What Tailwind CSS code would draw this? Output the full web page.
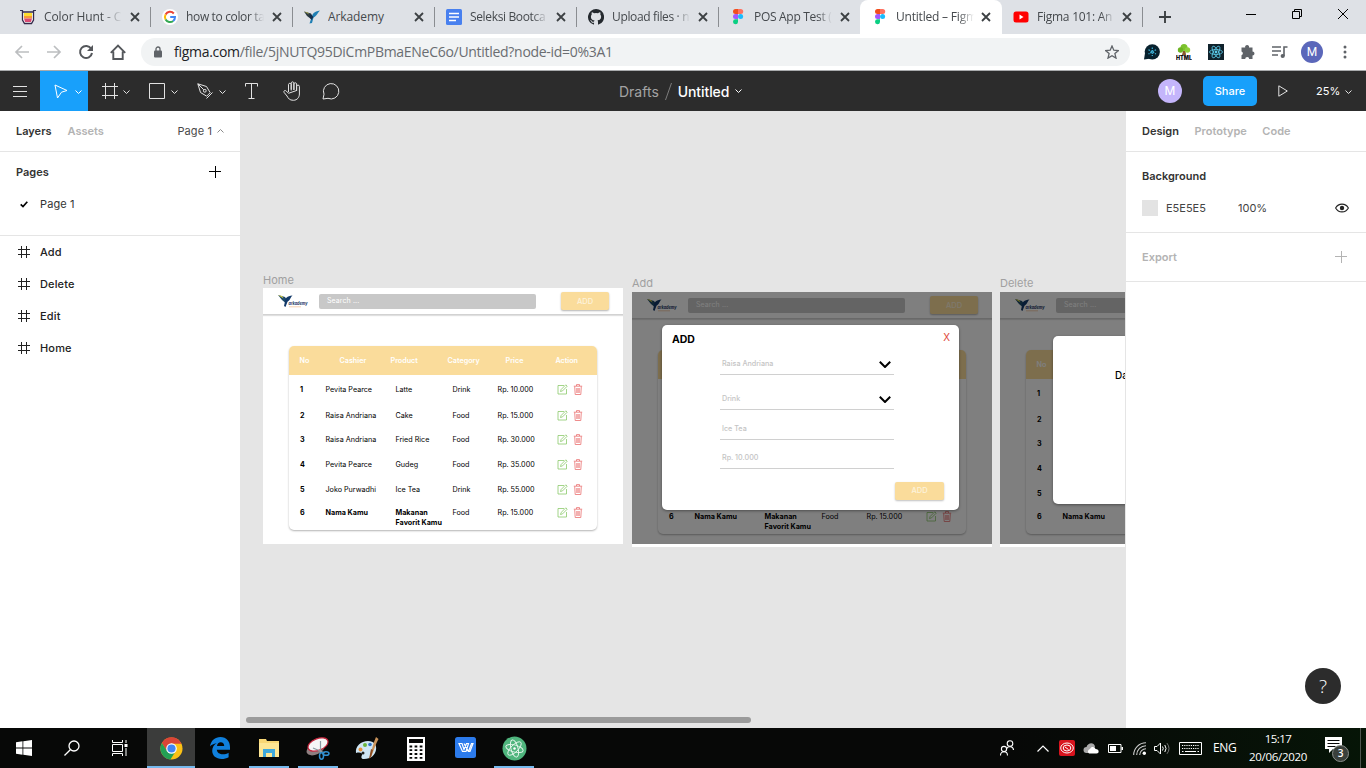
<!DOCTYPE html>
<html lang="en">
<head>
<meta charset="utf-8">
<title>Untitled – Figma</title>
<script src="https://cdn.jsdelivr.net/npm/@tailwindcss/browser@4"></script>
</head>
<body class="w-[1366px] h-[768px] overflow-hidden flex flex-col font-['Inter',sans-serif] text-[11px] text-[#333] bg-white">

<!-- shared symbols -->
<svg class="hidden">
  <symbol id="close" viewBox="0 0 10 10"><path d="M1 1l8 8M9 1L1 9" stroke="#3c4043" stroke-width="1.8" fill="none"/></symbol>
  <symbol id="figma" viewBox="0 0 12 16"><path d="M3.500 0H6v5H3.500A2.500 2.500 0 0 1 3.500 0z" fill="#f24e1e"/><path d="M6 0h2.700a2.500 2.500 0 0 1 0 5H6z" fill="#ff7262"/><path d="M3.500 5H6v5H3.500a2.500 2.500 0 0 1 0-5z" fill="#a259ff"/><circle cx="8.600" cy="7.500" r="2.500" fill="#1abcfe"/><path d="M3.500 10.300H6V13a2.500 2.500 0 1 1-2.500-2.700z" fill="#0acf83"/></symbol>
  <symbol id="bird" viewBox="0 0 16 14"><path d="M0 1.500l7 2 1.500 3L7 9 3 6z" fill="#2b3a42"/><path d="M0 1.500l4 1 1 2z" fill="#a3a04a"/><path d="M8 7.500c0-3.500 2-6 8-7-2 1.500-2.500 5-6.500 7L8 13l-2.500.5L7 9z" fill="#1f7fb4"/><path d="M6.500 4l3 3-2 3-2-3z" fill="#152e4d"/></symbol>
  <symbol id="chev" viewBox="0 0 7 4"><path d="M.5.5l3 3 3-3" fill="none" stroke="currentColor"/></symbol>
  <symbol id="hash" viewBox="0 0 12 12"><path d="M3.500 0v12M8.500 0v12M0 3.500h12M0 8.500h12" fill="none" stroke="currentColor"/></symbol>
  <symbol id="plus" viewBox="0 0 12 12"><path d="M6.500 0v12M0 5.500h12" fill="none" stroke="currentColor"/></symbol>
  <symbol id="edit" viewBox="0 0 11 11"><path d="M7 1.500H1v8.500h8.500V5" fill="none" stroke="#8cc96b" stroke-width=".8"/><path d="M3.500 7.500l.6-2L8.800.8l1.400 1.400-4.700 4.700z" fill="none" stroke="#8cc96b" stroke-width=".8"/></symbol>
  <symbol id="trash" viewBox="0 0 9 11"><path d="M.3 2.200h8.400M3 2V.6h3V2M1.200 2.500l.5 8h5.600l.5-8M3.300 4v5M4.500 4v5M5.700 4v5" fill="none" stroke="#ea6f6f" stroke-width=".8"/></symbol>
  <symbol id="logo" viewBox="0 0 31 15"><path d="M0 1l7 2 2 3-2 2.500-3-2.500z" fill="#1d4a6b"/><path d="M7 7.500c0-3.500 2-5.500 7.500-6C12.500 3 12.500 6 9.500 7.800L7.500 13 6 12z" fill="#12396a"/><path d="M0 1l4 1 1.500 2.500z" fill="#d8ce3a"/><text x="10.500" y="10.800" font-family="Inter" font-size="4.600" font-weight="700" font-style="italic" fill="#16305e" textLength="19" lengthAdjust="spacingAndGlyphs">arkademy</text><path d="M11 12.800h12" stroke="#f0b27a" stroke-width=".6"/></symbol>
</svg>

<!-- browser tabs -->
<header class="h-[34px] shrink-0 bg-[#dee1e6] flex font-['Open_Sans',sans-serif] text-[12px] tracking-[-0.25px] text-[#45494d]">
  <div class="w-[9px]"></div>
  <div class="w-[142px] flex items-center pl-[11px]">
    <svg class="w-4 h-4" viewBox="0 0 16 16"><path d="M0 1.500h3M13 1.500h3M2.500 1v2.500M13.500 1v2.500" stroke="#333355" stroke-width="1.200"/><path d="M2.500 3h11v8l-2 3.500h-7l-2-3.500z" fill="#fff" stroke="#33284a" stroke-width="1.300"/><path d="M4 4h8v3H4z" fill="#fddc2e"/><path d="M4 7h8v2.500H4z" fill="#f7983a"/><path d="M4 9.500h8L11 13H5z" fill="#d84a72"/></svg>
    <span class="ml-2 w-[78px] overflow-hidden whitespace-nowrap mask-r-from-75% tracking-[-0.1px]">Color Hunt - C</span>
    <svg class="w-[10px] h-[10px] ml-[8px]"><use href="#close"/></svg>
    <i class="ml-auto w-px h-5 bg-[#8a8d91]"></i>
  </div>
  <div class="w-[142px] flex items-center pl-[11px]">
    <svg class="w-4 h-4" viewBox="0 0 16 16"><circle cx="8" cy="8" r="8" fill="#fff"/><g fill="none" stroke-width="2"><path d="M11.800 4.500A5 5 0 0 0 3.600 5.500" stroke="#ea4335"/><path d="M3.600 5.500a5 5 0 0 0 0 5" stroke="#fbbc05"/><path d="M3.600 10.500a5 5 0 0 0 7.600 1.400" stroke="#34a853"/><path d="M11.200 11.900A5 5 0 0 0 13 8H8.200" stroke="#4285f4"/></g></svg>
    <span class="ml-2 w-[78px] overflow-hidden whitespace-nowrap mask-r-from-82% tracking-[-0.35px]">how to color ta</span>
    <svg class="w-[10px] h-[10px] ml-[8px]"><use href="#close"/></svg>
    <i class="ml-auto w-px h-5 bg-[#8a8d91]"></i>
  </div>
  <div class="w-[142px] flex items-center pl-[11px]">
    <svg class="w-4 h-[14px]"><use href="#bird"/></svg>
    <span class="ml-2 w-[78px] overflow-hidden whitespace-nowrap tracking-[-0.1px]">Arkademy</span>
    <svg class="w-[10px] h-[10px] ml-[8px]"><use href="#close"/></svg>
    <i class="ml-auto w-px h-5 bg-[#8a8d91]"></i>
  </div>
  <div class="w-[142px] flex items-center pl-[11px]">
    <svg class="w-4 h-4" viewBox="0 0 16 16"><rect width="16" height="16" rx="1.500" fill="#4880ef"/><path d="M3 4.500h10M3 8h10M3 11.500h7" stroke="#fff" stroke-width="1.700"/></svg>
    <span class="ml-2 w-[78px] overflow-hidden whitespace-nowrap mask-r-from-80% tracking-[-0.35px]">Seleksi Bootca</span>
    <svg class="w-[10px] h-[10px] ml-[8px]"><use href="#close"/></svg>
    <i class="ml-auto w-px h-5 bg-[#8a8d91]"></i>
  </div>
  <div class="w-[142px] flex items-center pl-[11px]">
    <svg class="w-4 h-4" viewBox="0 0 16 16"><path fill="#24292e" d="M8 0a8 8 0 0 0-2.530 15.590c.4.070.55-.17.55-.38v-1.490c-2.230.48-2.690-.94-2.690-.94-.36-.92-.89-1.170-.89-1.170-.73-.5.050-.49.050-.49.810.06 1.230.83 1.230.83.720 1.230 1.880.87 2.330.67.070-.52.280-.87.510-1.070-1.780-.2-3.640-.89-3.640-3.950 0-.88.310-1.590.820-2.150-.08-.2-.36-1.020.08-2.120 0 0 .67-.21 2.200.82a7.600 7.600 0 0 1 4 0c1.530-1.040 2.200-.82 2.200-.82.440 1.100.160 1.920.080 2.120.510.560.820 1.270.820 2.150 0 3.070-1.870 3.750-3.650 3.950.290.250.540.730.540 1.480v2.200c0 .21.150.46.550.38A8 8 0 0 0 8 0z"/></svg>
    <span class="ml-2 w-[78px] overflow-hidden whitespace-nowrap mask-r-from-82% tracking-[-0.35px]">Upload files · n</span>
    <svg class="w-[10px] h-[10px] ml-[8px]"><use href="#close"/></svg>
    <i class="ml-auto w-px h-5 bg-[#8a8d91]"></i>
  </div>
  <div class="w-[141px] flex items-center pl-[11px]">
    <svg class="w-4 h-4"><use href="#figma"/></svg>
    <span class="ml-2 w-[78px] overflow-hidden whitespace-nowrap mask-r-from-82% tracking-[-0.3px]">POS App Test (</span>
    <svg class="w-[10px] h-[10px] ml-[8px]"><use href="#close"/></svg>
  </div>
  <div class="w-[142px] flex items-center pl-3 bg-white rounded-t-lg">
    <svg class="w-4 h-4"><use href="#figma"/></svg>
    <span class="ml-2 w-[78px] overflow-hidden whitespace-nowrap mask-r-from-80% tracking-[-0.2px]">Untitled – Figm</span>
    <svg class="w-[10px] h-[10px] ml-[7px]"><use href="#close"/></svg>
  </div>
  <div class="w-[141px] flex items-center pl-[11px]">
    <svg class="w-4 h-4" viewBox="0 0 16 16"><rect x=".5" y="2.500" width="15" height="11" rx="2.500" fill="#f00"/><path d="M6.500 5.500v5l4-2.500z" fill="#fff"/></svg>
    <span class="ml-2 w-[78px] overflow-hidden whitespace-nowrap mask-r-from-82% tracking-[-0.25px]">Figma 101: An</span>
    <svg class="w-[10px] h-[10px] ml-[7px]"><use href="#close"/></svg>
    <i class="ml-auto w-px h-5 bg-[#8a8d91]"></i>
  </div>
  <svg class="w-3 h-3 mt-[11px] ml-4" viewBox="0 0 12 12"><path d="M6 0v12M0 6h12" stroke="#3c4043" stroke-width="1.900"/></svg>
  <div class="ml-auto flex items-center h-7 pr-[18px] gap-[36px]">
    <svg class="w-[10px] h-[10px]" viewBox="0 0 10 10"><path d="M0 5.500h10" stroke="#000"/></svg>
    <svg class="w-[10px] h-[10px]" viewBox="0 0 10 10"><path d="M.5 2.500h7v7h-7zM2.500 2.500v-2h7v7h-2" fill="none" stroke="#000"/></svg>
    <svg class="w-[10px] h-[10px]" viewBox="0 0 10 10"><path d="M0 0l10 10M10 0L0 10" stroke="#000"/></svg>
  </div>
</header>

<!-- address bar -->
<div class="h-9 shrink-0 bg-white flex items-center pl-[14px] pr-3">
  <svg class="w-[16px] h-4" viewBox="0 0 16 16"><path d="M15 8H2M8 2L2 8l6 6" fill="none" stroke="#bcbec0" stroke-width="1.700"/></svg>
  <svg class="w-[16px] h-4 ml-4" viewBox="0 0 16 16"><path d="M1 8h13M8 2l6 6-6 6" fill="none" stroke="#bcbec0" stroke-width="1.700"/></svg>
  <svg class="w-[16px] h-4 ml-4" viewBox="0 0 16 16"><path d="M13.200 4.800A6 6 0 1 0 14 9" fill="none" stroke="#54575b" stroke-width="2"/><path d="M15 1v6H9z" fill="#54575b"/></svg>
  <svg class="w-[16px] h-4 ml-4" viewBox="0 0 16 16"><path d="M.8 8.800L8 1.500l7.200 7.300M3.300 7.500V15h9.400V7.500" fill="none" stroke="#54575b" stroke-width="1.900"/></svg>
  <div class="ml-[15px] w-[989px] h-7 rounded-full bg-[#f1f3f4] flex items-center pl-[13px] pr-[11px] font-['Open_Sans',sans-serif] text-[14px] tracking-[-0.29px] text-[#6a6d71]">
    <svg class="w-2 h-3" viewBox="0 0 8 12"><rect y="4.500" width="8" height="7" rx="1" fill="#5f6368"/><path d="M2 5V3a2 2 0 0 1 4 0v2" fill="none" stroke="#5f6368" stroke-width="1.300"/></svg>
    <span class="ml-3 whitespace-nowrap -mt-0.5"><span class="text-[#202124]">figma.com</span>/file/5jNUTQ95DiCmPBmaENeC6o/Untitled?node-id=0%3A1</span>
    <svg class="w-[14px] h-[14px] ml-auto" viewBox="0 0 14 14"><path d="M7 1l1.800 4.200 4.600.4-3.500 3 1.100 4.500-4-2.400-4 2.400L4.100 8.600l-3.500-3 4.600-.4z" fill="none" stroke="#5f6368" stroke-width="1.300"/></svg>
  </div>
  <svg class="w-4 h-4 ml-[14px]" viewBox="0 0 16 16"><circle cx="8.300" cy="7.800" r="7.600" fill="#08222f"/><path d="M0 15.500L1 9l6 5.500z" fill="#08222f"/><g stroke="#3fb6dd" stroke-width="1.200"><path d="M8.300 3.500v8.600M4.500 5.700l7.500 4.300M12 5.700L4.500 10" stroke-dasharray="1.600 .9"/></g></svg>
  <svg class="w-4 h-4 ml-4" viewBox="0 0 16 16"><path d="M7 7h2.500l.5 4H6z" fill="#8a5a2b"/><circle cx="8" cy="3.500" r="3.500" fill="#7cc22d"/><circle cx="4.500" cy="6" r="2.700" fill="#6cb321"/><circle cx="11.500" cy="6" r="2.700" fill="#8fd03a"/><text x="0" y="15.700" font-family="Inter" font-weight="900" font-size="5.600" letter-spacing="0" textLength="16" lengthAdjust="spacingAndGlyphs" fill="#111">HTML</text></svg>
  <svg class="w-4 h-4 ml-4" viewBox="0 0 16 16"><rect width="16" height="16" fill="#10222c"/><g fill="none" stroke="#5ccbea" stroke-width=".8"><ellipse cx="8" cy="8" rx="6.500" ry="2.500"/><ellipse cx="8" cy="8" rx="6.500" ry="2.500" transform="rotate(60 8 8)"/><ellipse cx="8" cy="8" rx="6.500" ry="2.500" transform="rotate(120 8 8)"/></g><circle cx="8" cy="8" r="1.400" fill="#5ccbea"/></svg>
  <svg class="w-4 h-4 ml-4" viewBox="0 0 16 16"><path d="M1.500 3.500h3.700a2 2 0 1 1 3.800 0H12.500v4a2 2 0 1 1 0 4v3.500H9.200a2 2 0 0 0-4 0H1.500v-3.800a2 2 0 0 0 0-3.800z" fill="#5f6368"/></svg>
  <svg class="w-4 h-4 ml-4" viewBox="0 0 16 16"><path d="M0 3h9M0 7h9M0 11h6M12 12V3h3.500" stroke="#5f6368" stroke-width="1.600" fill="none"/><circle cx="10.700" cy="12" r="2.100" fill="#5f6368"/></svg>
  <div class="ml-[13px] size-[22px] rounded-full bg-[#5b67ba] text-white font-['Roboto',sans-serif] text-[12px] flex items-center justify-center">M</div>
  <svg class="w-4 h-4 ml-[14px]" viewBox="0 0 16 16"><circle cx="8" cy="3" r="1.500" fill="#5f6368"/><circle cx="8" cy="8" r="1.500" fill="#5f6368"/><circle cx="8" cy="13" r="1.500" fill="#5f6368"/></svg>
</div>

<!-- editor toolbar -->
<div class="h-[41px] shrink-0 bg-[#2c2c2c] border-t border-[#a9abad] flex items-center text-[#e2e2e2]">
  <div class="w-10 flex justify-center"><svg class="w-[14px] h-[11px]" viewBox="0 0 14 11"><path d="M0 .5h14M0 5.500h14M0 10.500h14" stroke="currentColor"/></svg></div>
  <div class="w-12 h-full bg-[#18a0fb] text-white flex items-center">
    <svg class="w-[14px] h-[15px] ml-[14px]" viewBox="0 0 14 15"><path d="M1 1l12 5.500-5.500 1.700L3.500 14z" fill="none" stroke="currentColor" stroke-linejoin="round"/></svg>
    <svg class="w-[7px] h-1 ml-[7px] mt-px"><use href="#chev"/></svg>
  </div>
  <div class="w-12 flex items-center">
    <svg class="w-4 h-4 ml-[14px]" viewBox="0 0 16 16"><path d="M3.500 0v16M12.500 0v16M0 3.500h16M0 12.500h16" stroke="currentColor"/></svg>
    <svg class="w-[7px] h-1 ml-[5px] mt-px"><use href="#chev"/></svg>
  </div>
  <div class="w-12 flex items-center">
    <svg class="w-4 h-4 ml-[13px]" viewBox="0 0 16 16"><path d="M.5.5h15v15H.5z" fill="none" stroke="currentColor"/></svg>
    <svg class="w-[7px] h-1 ml-[6px] mt-px"><use href="#chev"/></svg>
  </div>
  <div class="w-12 flex items-center">
    <svg class="w-4 h-4 ml-[13px]" viewBox="0 0 16 16"><path d="M.8.8l8.700 2.700 3.700 6.200-3.500 3.500L3.500 9.500zM.8.8l6 6M9.500 15.500l6-6" fill="none" stroke="currentColor" stroke-linejoin="round"/><circle cx="7.800" cy="7.800" r="1.400" fill="none" stroke="currentColor"/></svg>
    <svg class="w-[7px] h-1 ml-[6px] mt-px"><use href="#chev"/></svg>
  </div>
  <svg class="w-[13px] h-4 ml-[13px]" viewBox="0 0 13 16"><path d="M.5 3.500v-3h12v3M6.500.5v15M3.500 15.500h6" fill="none" stroke="currentColor"/></svg>
  <svg class="w-[18px] h-[20px] ml-[25px]" viewBox="0 0 18 20"><path d="M5.500 11V3.300a1.400 1.400 0 0 1 2.700 0V9.500M8.200 8.500V1.900a1.400 1.400 0 0 1 2.700 0v7M10.900 9V2.800a1.400 1.400 0 0 1 2.700 0V10M13.600 9.500V5.500a1.400 1.400 0 0 1 2.800 0V13c0 3-2 6.300-6 6.300S5.500 17.500 4 15L1 11.300c-.6-1.500 1-2.500 2.300-1.300l2.200 2.300z" fill="none" stroke="currentColor" stroke-linejoin="round"/></svg>
  <svg class="w-[18px] h-[17px] ml-[21px]" viewBox="0 0 18 17"><path d="M1 16l1-4.800A7.700 7.700 0 1 1 6 15.300z" fill="none" stroke="currentColor" stroke-linejoin="round"/></svg>
  <div class="ml-[279px] flex items-center text-[14px] whitespace-nowrap">
    <span class="text-[#a3a3a3]">Drafts</span>
    <svg class="w-[7px] h-[17px] ml-[6px]" viewBox="0 0 7 17"><path d="M6.500 0L.5 17" stroke="#7d7d7d"/></svg>
    <span class="ml-[6px] font-medium text-white tracking-[-0.1px]">Untitled</span>
    <svg class="w-[7px] h-1 ml-[6px] text-white"><use href="#chev"/></svg>
  </div>
  <div class="ml-auto mr-[14px] flex items-center">
    <div class="size-6 rounded-full bg-[#c4b5fb] text-white text-[12px] flex items-center justify-center">M</div>
    <div class="ml-[21px] w-[54px] h-[30px] rounded-[5px] bg-[#18a0fb] text-white font-medium text-[11px] flex items-center justify-center">Share</div>
    <svg class="w-[10px] h-3 ml-[21px]" viewBox="0 0 10 12"><path d="M.8.8v10.400L9.300 6z" fill="none" stroke="currentColor"/></svg>
    <span class="ml-[28px] w-[23px] whitespace-nowrap text-[11px] text-white mt-px">25%</span>
    <svg class="w-[7px] h-1 ml-[6px] mt-px"><use href="#chev"/></svg>
  </div>
</div>

<main class="h-[617px] shrink-0 flex">
  <!-- layers -->
  <aside class="w-60 bg-white">
    <div class="h-[41px] border-b border-[#e5e5e5] flex items-center px-4">
      <span class="font-semibold">Layers</span>
      <span class="font-semibold ml-4 text-[#b3b3b3]">Assets</span>
      <span class="ml-auto text-[#4a4a4a] tracking-[0.1px]">Page 1</span>
      <svg class="w-[7px] h-1 ml-[5px] rotate-180 text-[#8a8a8a]"><use href="#chev"/></svg>
    </div>
    <div class="h-[84px] border-b border-[#e5e5e5]">
      <div class="h-10 flex items-center pl-4 pr-[19px]"><span class="font-semibold">Pages</span><svg class="size-3 ml-auto text-black"><use href="#plus"/></svg></div>
      <div class="h-6 flex items-center pl-5"><svg class="w-2 h-[7px]" viewBox="0 0 8 7"><path d="M.7 3.300L3 5.500 7.300.8" fill="none" stroke="#000" stroke-width="1.700"/></svg><span class="ml-3 text-[#333] tracking-[0.1px]">Page 1</span></div>
    </div>
    <div class="font-medium text-[#222] tracking-[0.15px]">
      <div class="h-8 flex items-center pl-[18px] gap-[10px]"><svg class="size-3"><use href="#hash"/></svg>Add</div>
      <div class="h-8 flex items-center pl-[18px] gap-[10px]"><svg class="size-3"><use href="#hash"/></svg>Delete</div>
      <div class="h-8 flex items-center pl-[18px] gap-[10px]"><svg class="size-3"><use href="#hash"/></svg>Edit</div>
      <div class="h-8 flex items-center pl-[18px] gap-[10px]"><svg class="size-3"><use href="#hash"/></svg>Home</div>
    </div>
  </aside>

  <!-- canvas -->
  <section class="w-[885px] bg-[#e5e5e5] relative overflow-hidden text-black">
    <div class="absolute left-[23px] top-[161px] text-[#a0a0a0]">Home</div>
    <div class="absolute left-[392px] top-[164px] text-[#a0a0a0]">Add</div>
    <div class="absolute left-[760px] top-[164px] text-[#a0a0a0]">Delete</div>

    <div class="absolute left-[23px] top-[177px] w-[360px] h-[256px] bg-white overflow-hidden" data-screen></div>

    <div class="absolute left-[392px] top-[181px] w-[360px] h-[255px] bg-white overflow-hidden">
      <div class="w-[360px] h-[252px] bg-white overflow-hidden" data-screen></div>
      <div class="absolute inset-x-0 top-0 h-[252px] bg-black/50 pt-[33px] pl-[30px]">
        <div class="w-[297px] h-[185px] rounded-[5px] bg-white shadow-[0_1px_3px_rgba(0,0,0,0.4)] text-[7.200px] text-[#c4c4c4]">
          <div class="h-[28px] flex justify-between items-center pl-[10px] pr-[9px]">
            <b class="text-[10.500px] text-black tracking-[-0.1px] mt-px">ADD</b><span class="text-[10px] text-[#e0493c] -mt-1">X</span>
          </div>
          <div class="ml-[58px] w-[174px] font-medium">
            <div class="h-[22px] pt-[2px] border-b border-[#d0d0d0] flex justify-between items-center pl-[2px] pr-[3px]">Raisa Andriana<svg class="w-3 h-[7px]" viewBox="0 0 12 7"><path d="M.8.800L6 6 11.200.8" fill="none" stroke="#000" stroke-width="2"/></svg></div>
            <div class="h-[35px] pt-[15px] border-b border-[#d0d0d0] flex justify-between items-center pl-[2px] pr-[3px]">Drink<svg class="w-3 h-[7px]" viewBox="0 0 12 7"><path d="M.8.800L6 6 11.200.8" fill="none" stroke="#000" stroke-width="2"/></svg></div>
            <div class="h-[30px] pt-[9px] border-b border-[#d0d0d0] flex items-center pl-[2px]">Ice Tea</div>
            <div class="h-[29px] pt-[8px] border-b border-[#d0d0d0] flex items-center pl-[2px]">Rp. 10.000</div>
          </div>
          <div class="mt-[13px] ml-[233px] w-[49px] h-[18px] rounded-[2px] bg-[#fadc9b] shadow-[0_1px_2px_rgba(0,0,0,0.25)] text-[#fdf3dc] font-medium text-[7.500px] flex items-center justify-center">ADD</div>
        </div>
      </div>
    </div>

    <div class="absolute left-[760px] top-[181px] w-[360px] h-[255px] bg-white overflow-hidden">
      <div class="w-[360px] h-[252px] bg-white overflow-hidden" data-screen></div>
      <div class="absolute inset-x-0 top-0 h-[252px] bg-black/50 pt-[44px] pl-[53px]">
        <div class="w-[254px] h-[168px] rounded-[5px] bg-white shadow-[0_1px_3px_rgba(0,0,0,0.4)] pt-[32px] pl-[62px] text-[10px] font-medium whitespace-nowrap">Data</div>
      </div>
    </div>

    <div class="absolute left-[6px] top-[606px] w-[505px] h-[6px] rounded-full bg-[#9b9b9b]"></div>
  </section>

  <!-- design panel -->
  <aside class="w-[241px] bg-white border-l border-[#e5e5e5] relative">
    <div class="h-[41px] border-b border-[#e5e5e5] flex items-center pl-4 gap-[15.500px] font-semibold text-[#b3b3b3]"><span class="text-[#333]">Design</span><span>Prototype</span><span>Code</span></div>
    <div class="h-[81px] border-b border-[#e5e5e5] pt-2 pl-4 pr-[17px]">
      <div class="h-8 flex items-center font-semibold">Background</div>
      <div class="h-8 flex items-center text-[#444]"><i class="size-4 bg-[#e3e3e3]"></i><span class="ml-2 w-[72px]">E5E5E5</span><span>100%</span>
        <svg class="w-[14px] h-[10px] ml-auto" viewBox="0 0 14 10"><path d="M.6 5C3.500-.2 10.500-.2 13.400 5 10.500 10.200 3.500 10.200.6 5z" fill="none" stroke="#222" stroke-width="1.100"/><circle cx="7" cy="5" r="2.200" fill="#222"/></svg></div>
    </div>
    <div class="h-[49px] border-b border-[#e5e5e5] flex items-center pl-4 pr-[19px] font-semibold text-[#b3b3b3]">Export<svg class="size-3 ml-auto"><use href="#plus"/></svg></div>
    <div class="absolute left-[179px] top-[557px] size-9 rounded-full bg-[#2c2c2c] text-white font-['Open_Sans',sans-serif] text-[19px] font-light flex items-center justify-center">?</div>
  </aside>
</main>

<!-- taskbar -->
<footer class="h-10 shrink-0 bg-[#070807] flex text-white font-['Open_Sans',sans-serif]">
  <div class="w-12 flex items-center justify-center"><svg class="size-4" viewBox="0 0 16 16"><path d="M0 2.200L6.500 1.300v6.300H0zM7.300 1.200L16 0v7.600H7.300zM0 8.400h6.500v6.300L0 13.800zM7.300 8.400H16V16l-8.700-1.200z" fill="#fff"/></svg></div>
  <div class="w-12 flex items-center justify-center"><svg class="size-4" viewBox="0 0 16 16"><circle cx="10" cy="6" r="5" fill="none" stroke="#fff" stroke-width="1.300"/><path d="M6.300 9.700L.5 15.500" stroke="#fff" stroke-width="1.300"/></svg></div>
  <div class="w-[51px] flex items-center pl-4"><svg class="size-4" viewBox="0 0 16 16"><path d="M.5 0v2.500h10V0M.5 16v-2.500h10V16M.5 4.500h10v7H.5zM14 0v3M14 8v8" fill="none" stroke="#fff"/><rect x="12.500" y="4" width="3" height="3" fill="#fff"/></svg></div>
  <div class="w-12 flex items-center justify-center bg-[#3b3c3b] border-b-2 border-[#76b9ed] pt-[2px]"><svg class="size-[23px]" viewBox="0 0 24 24"><circle cx="12" cy="12" r="11.500" fill="#fbc116"/><path d="M2 6.200A11.500 11.500 0 0 1 22 6.200L22.500 7H12L7 14.700z" fill="#db4437"/><path d="M2 6.200A11.500 11.500 0 0 0 10.900 23.500L16.500 14.500 7.300 14.500z" fill="#23a055"/><circle cx="12" cy="12" r="5.500" fill="#fff"/><circle cx="12" cy="12" r="4.300" fill="#4285f4"/></svg></div>
  <div class="w-[49px] flex items-center justify-center"><svg class="w-[20px] h-[22px]" viewBox="0 0 20 22"><path d="M0 9.500C1 3.500 5 0 10.500 0 16.500 0 20 4.500 20 10v2.800H6.800c.3 3 3 4.500 6 4.500 2.200 0 4.200-.6 5.800-1.600v4.500c-2 1.200-4.500 1.800-7 1.800C6 22 2.200 18.600 2.200 13.800c0-3.300 1.700-6 4.500-7.500C3.600 6.600 1.400 8 0 9.500zM7 9h7.200c0-2.500-1.300-3.800-3.500-3.800C8.700 5.200 7.200 6.800 7 9z" fill="#1080dd"/></svg></div>
  <div class="w-[49px] flex items-end justify-center"><div class="w-10 h-10 border-b-2 border-[#76b9ed] flex items-center justify-center pt-[2px]"><svg class="w-[22px] h-[20px]" viewBox="0 0 22 20"><path d="M1 1h7l1 2h12v15H1z" fill="#f8d775"/><path d="M1 5h20v14H1z" fill="#fde694"/><path d="M5 11h12v8h-3v-4H8v4H5z" fill="#3fa9dc"/></svg></div></div>
  <div class="w-[50px] flex items-end justify-center"><div class="w-10 h-10 border-b-2 border-[#76b9ed] flex items-center justify-center pt-[2px]"><svg class="w-[24px] h-[23px]" viewBox="0 0 24 23"><ellipse cx="9.500" cy="12" rx="9.500" ry="5.500" transform="rotate(-25 9.500 12)" fill="#8f7f80"/><ellipse cx="12" cy="7.500" rx="10.500" ry="5.800" transform="rotate(-22 12 7.500)" fill="#f6f6f6" stroke="#c4253c" stroke-width="1.200"/><path d="M14.500 4v12M7 11l12 5" stroke="#8d99a2" stroke-width="1.200"/><ellipse cx="15.500" cy="19" rx="2" ry="3.200" fill="none" stroke="#2f8fd0" stroke-width="1.500"/><ellipse cx="20" cy="16.500" rx="3" ry="1.800" fill="none" stroke="#2f8fd0" stroke-width="1.500"/></svg></div></div>
  <div class="w-12 flex items-center justify-center"><svg class="w-[24px] h-[24px]" viewBox="0 0 24 24"><path d="M1 17C0 10 6 5 13 5c6 0 9 4 8 9s-5 9-12 9c-3 0-3-2-2-4s-2-3-6-2z" fill="#cfe6f5"/><circle cx="5.500" cy="13.500" r="2" fill="#e6913c"/><circle cx="10" cy="9" r="2" fill="#69b53b"/><circle cx="15" cy="8.500" r="1.800" fill="#2f73c8"/><circle cx="8" cy="17" r="1.500" fill="#222"/><path d="M21 1l2.500 2-2 4-5 13-2 2 1-4L19 6z" fill="#c8925a"/><path d="M16 13l2 1-2 7-2 2z" fill="#8a4b22"/></svg></div>
  <div class="w-[50px] flex items-center justify-center"><svg class="w-[18px] h-[24px] mt-px" viewBox="0 0 18 24"><path d="M0 0h18v24H0z" fill="#fff"/><path d="M2 2h14v4H2z" fill="#070807"/><path d="M2.500 9.500h13M2.500 13.200h13M2.500 17h13M2.500 20.800h13" stroke="#070807" stroke-width="1.800" stroke-dasharray="2.700 2.400"/></svg></div>
  <div class="w-12 flex items-center justify-center"><svg class="size-[21px] -mt-px" viewBox="0 0 21 21"><rect width="21" height="21" rx="2.500" fill="#2c7bec"/><path d="M4 6.500h3l2 6 2.500-6h2L11 14.500H7.500zM13.500 14.500l3-8h1.500l-3 8zM9 6.500l4.500 8" fill="none" stroke="#fff" stroke-width="1.200"/></svg></div>
  <div class="w-[50px] flex items-end justify-center"><div class="w-10 h-10 border-b-2 border-[#76b9ed] flex items-center justify-center pt-[2px]"><svg class="size-[25px]" viewBox="0 0 24 24"><circle cx="12" cy="12" r="11.500" fill="#4fb57d"/><g fill="none" stroke="#e8f6ee" stroke-width=".9"><ellipse cx="12" cy="12" rx="8.500" ry="3.400" transform="rotate(15 12 12)"/><ellipse cx="12" cy="12" rx="8.500" ry="3.400" transform="rotate(75 12 12)"/><ellipse cx="12" cy="12" rx="8.500" ry="3.400" transform="rotate(135 12 12)"/></g><circle cx="12" cy="12" r="1.200" fill="#fff"/></svg></div></div>
  <div class="ml-auto flex items-center bg-gradient-to-r from-[#070807] to-[#061507] text-[12px]">
    <svg class="w-[14px] h-[16px]" viewBox="0 0 14 16"><g fill="none" stroke="#fff" stroke-width="1.100"><circle cx="10" cy="3.500" r="2.800"/><path d="M6.800 8.500c1-2.500 6.500-2.500 6.700 1.500"/><circle cx="4" cy="9" r="2.600"/><path d="M.5 15.500c0-5 7-5 7 0"/></g></svg>
    <svg class="w-[12px] h-[7px] ml-[23px]" viewBox="0 0 12 7"><path d="M.5 6.500L6 1l5.500 5.500" fill="none" stroke="#fff" stroke-width="1.200"/></svg>
    <svg class="size-4 ml-[10px] -mt-px" viewBox="0 0 16 16"><rect width="16" height="16" rx="2" fill="#d8141e"/><g fill="none" stroke="#fff"><ellipse cx="8" cy="8" rx="6.300" ry="5"/><ellipse cx="8" cy="8" rx="3.800" ry="3"/><path d="M6 7l3.500 2.500"/></g></svg>
    <svg class="w-4 h-[11px] ml-2" viewBox="0 0 16 11"><path d="M3.500 10a3 3 0 0 1 0-6C5-.5 11-1 12 3.500l-3 6.500z" fill="#aaa"/><path d="M6 10.500a2.500 2.500 0 0 1 1-4.500c1-3 5-2.500 5.500 0 4 0 4 4.500 1 4.500z" fill="#fff"/></svg>
    <svg class="w-[15px] h-[9px] ml-[9px] mt-px" viewBox="0 0 15 9"><path d="M.5.5h12.500v8H.5z" fill="none" stroke="#fff"/><path d="M2 2h6v5H2zM13.500 3H15v3h-1.500z" fill="#fff"/></svg>
    <svg class="w-[13px] h-[13px] ml-[10px]" viewBox="0 0 13 13"><g fill="none" stroke="#ccc" stroke-width="1.100"><path d="M.7 13A12.300 12.300 0 0 1 13 .7"/><path d="M3.700 13A9.300 9.300 0 0 1 13 3.700"/><path d="M6.700 13A6.300 6.300 0 0 1 13 6.700"/></g><circle cx="11.300" cy="11.300" r="1.700" fill="#fff"/></svg>
    <svg class="w-[17px] h-[13px] ml-[8px]" viewBox="0 0 17 13"><path d="M.5 4.500H3L6.500 1v11L3 8.500H.5z" fill="none" stroke="#fff"/><path d="M8.500 4.500q1.500 2 0 4M10.800 3q2.500 3.500 0 7" fill="none" stroke="#fff"/><path d="M13 1.200q4 5.300 0 10.600" fill="none" stroke="#777"/></svg>
    <svg class="w-[23px] h-[13px] ml-[8px]" viewBox="0 0 23 13"><path d="M.5.5h22v12H.5z" fill="none" stroke="#fff"/><path d="M3 3.500h17M3 6.500h17" stroke="#fff" stroke-width="1.200" stroke-dasharray="1.200 1"/><path d="M3 9.500h1.500M6 9.500h11M18.500 9.500H20" stroke="#fff"/></svg>
    <span class="ml-[11px] w-[23px] tracking-[-0.4px]">ENG</span>
    <div class="ml-[7px] w-[70px] text-center leading-[18px] text-[11.500px] tracking-[-0.3px] whitespace-nowrap -mt-px"><div class="tracking-[-0.6px]">15:17</div><div>20/06/2020</div></div>
    <div class="ml-[12px] w-[25px] h-[26px] relative mt-1"><svg class="w-[17px] h-[16px]" viewBox="0 0 17 16"><path d="M0 0h17v12H8l-4 4v-4H0z" fill="#fff"/><path d="M2.500 3.500h12M2.500 6.500h12M2.500 9.500h8" stroke="#070807"/></svg><span class="absolute left-[7px] top-[8px] size-[17px] rounded-full bg-[#3a403b] border border-[#8b8f8b] text-[10px] font-semibold flex items-center justify-center">3</span></div>
    <i class="ml-[10px] w-px h-10 bg-[#4d554e] mr-[5px]"></i>
  </div>
</footer>

<template id="screen">
  <div class="h-[27px] border-b border-[#d2d2d2] shadow-[0_1px_1px_rgba(0,0,0,0.12)] flex items-center">
    <svg class="w-[31px] h-[15px] ml-[15px]"><use href="#logo"/></svg>
    <div class="ml-[10px] w-[217px] h-[15px] rounded-[2px] bg-[#c8c8c8] text-white text-[7px] flex items-center pl-2 tracking-[0.1px]">Search ...</div>
    <div class="ml-[25px] w-[48px] h-[18px] rounded-[2px] bg-[#fadc9b] shadow-[0_1px_2px_rgba(0,0,0,0.3)] text-[#fdf3dc] font-medium text-[7.500px] flex items-center justify-center"><span class="pt-px">ADD</span></div>
  </div>
  <div class="mt-[31px] ml-[26px] w-[308px] h-[184px] rounded-[5px] bg-white shadow-[0_1px_2px_rgba(0,0,0,0.3)] overflow-hidden text-[7.200px]">
    <div class="h-[29px] pt-px bg-[#fadc9b] text-white font-semibold grid grid-cols-[40px_51px_57px_58px_50px_1fr] items-center pl-[10.500px]"><span>No</span><span>Cashier</span><span>Product</span><span>Category</span><span>Price</span><span>Action</span></div>
    <div data-rows></div>
  </div>
</template>
<template id="row">
  <div class="grid grid-cols-[25.500px_70px_57px_45px_59px_16px_16px] pl-[11px] leading-[10px] whitespace-pre">
    <b></b><span></span><span></span><span></span><span></span>
    <svg class="w-[11px] h-[11px] -mt-px"><use href="#edit"/></svg><svg class="w-[10px] h-[11px] -mt-px"><use href="#trash"/></svg>
  </div>
</template>
<script>
const rows = [
  ['1','Pevita Pearce','Latte','Drink','Rp. 10.000', 'mt-[10px]'],
  ['2','Raisa Andriana','Cake','Food','Rp. 15.000', 'mt-[15px]'],
  ['3','Raisa Andriana','Fried Rice','Food','Rp. 30.000', 'mt-[13px]'],
  ['4','Pevita Pearce','Gudeg','Food','Rp. 35.000', 'mt-[14px]'],
  ['5','Joko Purwadhi','Ice Tea','Drink','Rp. 55.000', 'mt-[14px]'],
  ['6','Nama Kamu','Makanan\nFavorit Kamu','Food','Rp. 15.000', 'mt-[12px]']
];
document.querySelectorAll('[data-screen]').forEach(el => {
  const s = document.getElementById('screen').content.cloneNode(true);
  const body = s.querySelector('[data-rows]');
  rows.forEach((r, i) => {
    const n = document.getElementById('row').content.cloneNode(true);
    const line = n.firstElementChild;
    line.classList.add(r[5]);
    if (i < 5) line.classList.add('h-[11px]');
    for (let c = 0; c < 5; c++) line.children[c].textContent = r[c];
    if (i === 5) { line.children[1].classList.add('font-bold'); line.children[2].classList.add('font-bold'); }
    body.appendChild(n);
  });
  el.appendChild(s);
});
</script>
</body>
</html>
